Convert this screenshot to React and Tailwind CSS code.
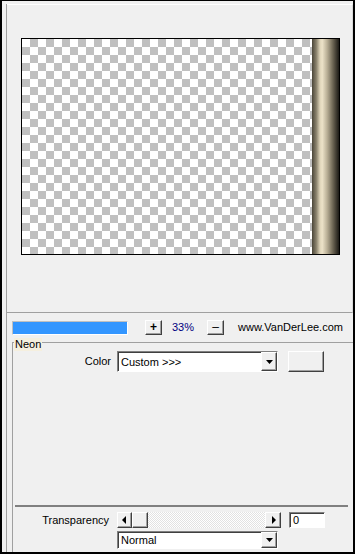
import React from 'react';

const Raised = ({ className = '', children }) => (
  <div className={`flex items-center justify-center bg-[#f0f0f0] border border-t-white border-l-white border-r-[#404040] border-b-[#404040] shadow-[inset_-1px_-1px_0_#a0a0a0] ${className}`}>
    {children}
  </div>
);

const Arrow = ({ dir }) => (
  <svg width="5" height="8" viewBox="0 0 5 8">
    {dir === 'left' && <path d="M4 0 L4 8 L0 4 Z" fill="#000" />}
    {dir === 'right' && <path d="M1 0 L1 8 L5 4 Z" fill="#000" />}
  </svg>
);

const Select = ({ value, className = '' }) => (
  <div className={`flex items-center bg-white border border-t-[#808080] border-l-[#808080] border-r-white border-b-white shadow-[inset_1px_1px_0_#404040] ${className}`}>
    <span className="flex-1 pl-[3px] pt-[1px] text-[11px] text-black">{value}</span>
    <Raised className="w-[16px] h-full">
      <svg width="7" height="4" viewBox="0 0 7 4"><path d="M0 0 L7 0 L3.5 4 Z" fill="#000" /></svg>
    </Raised>
  </div>
);

export default function App() {
  return (
    <div className="w-[359px] h-[558px] bg-white" style={{ fontFamily: '"Liberation Sans", Arial, sans-serif' }}>
      <div className="w-[355px] h-[554px] border-t border-l-2 border-r-2 border-b-2 border-black bg-[#f0f0f0] pl-[4px] pt-[3px]">
        <div className="h-[548px] border-l border-[#a0a0a0] flex flex-col">
          {/* preview panel */}
          <div className="w-[346px] h-[309px] border border-l-0 border-t-white border-r-[#d8d8d8] border-b-[#a0a0a0] bg-[#f0f0f0] pl-[14px] pt-[33px]">
            <div className="flex w-[319px] h-[217px] border border-black">
              <div className="w-[290px] h-full bg-[conic-gradient(#c0c0c0_25%,#ffffff_0_50%,#c0c0c0_0_75%,#ffffff_0)] bg-[length:16px_16px]" />
              <div className="flex-1 h-full bg-[linear-gradient(to_right,#4a4538_0%,#8a826d_16%,#e0d6bb_30%,#ece2c8_38%,#b9af96_56%,#6a6352_78%,#1c1a16_100%)]" />
            </div>
          </div>

          {/* toolbar */}
          <div className="flex items-center h-[29px] pl-[5px]">
            <div className="w-[116px] h-[14px] bg-[#3396ff] border border-t-[#c0c0c0] border-l-[#c0c0c0] border-r-white border-b-white" />
            <Raised className="ml-[17px] w-[17px] h-[15px] text-[12px] font-bold leading-none pb-[1px]">+</Raised>
            <span className="ml-[10px] w-[35px] text-[11px] text-[#000080]">33%</span>
            <Raised className="w-[17px] h-[15px] text-[12px] leading-none pb-[2px]">–</Raised>
            <span className="ml-[14px] text-[11px] text-black">www.VanDerLee.com</span>
          </div>

          {/* Neon group */}
          <div className="relative ml-[5px] w-[341px] flex-1 border-t border-l border-[#a0a0a0] flex flex-col">
            <span className="absolute left-[1px] top-[-5px] px-[1px] bg-[#f5efde] text-[11px] leading-[13px] text-black">Neon</span>
            <div className="flex items-center mt-[8px] h-[21px]">
              <span className="w-[98px] text-right text-[11px] text-black">Color</span>
              <Select value="Custom >>>" className="ml-[6px] w-[161px] h-[21px]" />
              <Raised className="ml-[10px] w-[36px] h-[21px]" />
            </div>
            <div className="flex-1" />
            <div className="ml-[2px] w-[333px] h-[2px] bg-[#808080]" />
            <div className="flex items-center mt-[5px] h-[16px]">
              <span className="w-[96px] text-right text-[11px] text-black">Transparency</span>
              <div className="ml-[8px] flex w-[164px] h-[16px] bg-[repeating-conic-gradient(#e2e2e2_0_25%,#ffffff_0_50%)] bg-[length:2px_2px]">
                <Raised className="w-[15px] h-[16px]"><Arrow dir="left" /></Raised>
                <Raised className="w-[16px] h-[16px]" />
                <div className="flex-1" />
                <Raised className="w-[16px] h-[16px]"><Arrow dir="right" /></Raised>
              </div>
              <div className="ml-[8px] w-[36px] h-[16px] bg-white border border-t-[#808080] border-l-[#808080] border-r-white border-b-white shadow-[inset_1px_1px_0_#404040] text-[11px] pl-[3px] leading-[14px]">0</div>
            </div>
            <div className="mt-[3px] mb-[3px] ml-[104px]">
              <Select value="Normal" className="w-[161px] h-[18px]" />
            </div>
          </div>
        </div>
      </div>
    </div>
  );
}
